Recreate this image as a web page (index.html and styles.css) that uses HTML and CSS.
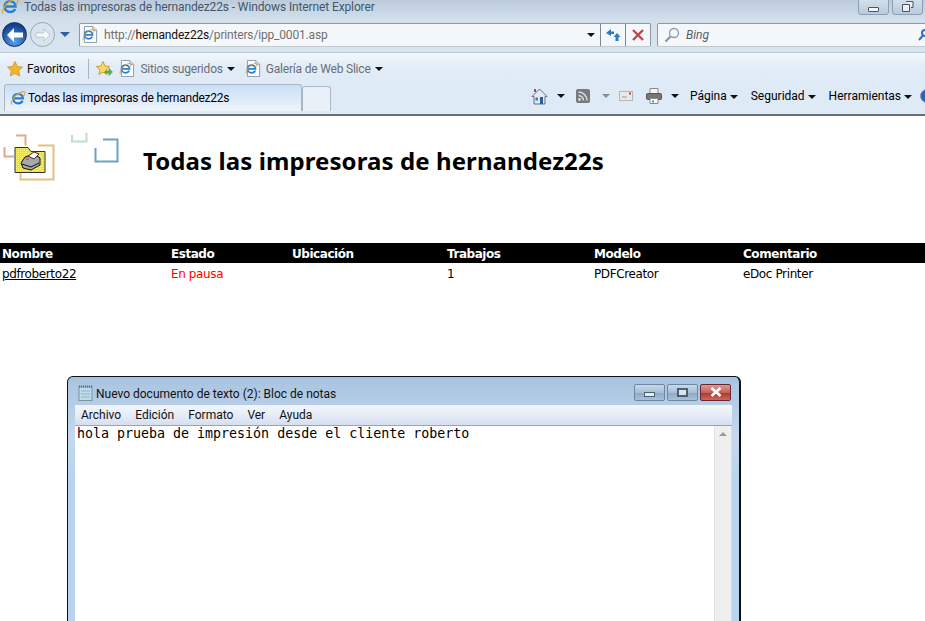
FILE: index.html
```html
<!DOCTYPE html>
<html lang="es">
<head>
<meta charset="UTF-8">
<title>Todas las impresoras de hernandez22s</title>
<link rel="stylesheet" href="styles.css">
</head>
<body>
<svg class="defs" width="0" height="0">
  <symbol id="ie" viewBox="0 0 18 18">
    <path d="M4 9.500h10.500C14.500 6.500 12 4.300 9 4.300S3.500 6.600 3.500 9.600 6 15 9 15c2.400 0 4.200-1 5.200-3" fill="none" stroke="#2a80cf" stroke-width="2.500"/>
    <path d="M2 16.500C.3 14.500 3.500 8 9 4.300c4-2.700 8-3.500 8-1 0 1-.8 2.500-2 3.700" fill="none" stroke="#e8a62c" stroke-width="1.300"/>
  </symbol>
  <symbol id="page" viewBox="0 0 16 18">
    <path d="M1.500.5h9l4 4v13h-13z" fill="#fdfdfd" stroke="#8b97a3"/>
    <path d="M10.500.5v4h4" fill="#dfe5ea" stroke="#8b97a3"/>
  </symbol>
  <pattern id="dither" width="2" height="2" patternUnits="userSpaceOnUse">
    <rect width="2" height="2" fill="#f5e800"/>
    <rect width="1" height="1" fill="#fff66a"/>
  </pattern>
</svg>

<div class="browser">
  <div class="titlebar">
    <svg class="ic18"><use href="#ie"/></svg>
    <span class="titlebar-text">Todas las impresoras de hernandez22s - Windows Internet Explorer</span>
    <div class="winbtns">
      <span class="winbtn"><i class="glyph-min"></i></span>
      <span class="winbtn"><svg width="12" height="11" viewBox="0 0 12 11"><path d="M4 .5h7v6H9M.5 3.500h7v7h-7z" fill="#e8eef5" stroke="#4a5560"/></svg></span>
      <span class="winbtn"></span>
    </div>
  </div>

  <div class="addressrow">
    <div class="navbtns">
      <span class="nav-back">
        <svg width="18" height="16" viewBox="0 0 18 16"><path d="M8 1 1 8l7 7V10.500h9v-5H8z" fill="#fff"/></svg>
      </span>
      <span class="nav-forward">
        <svg width="16" height="14" viewBox="0 0 18 16"><path d="M10 1l7 7-7 7V10.500H1v-5h9z" fill="#f4f6f8" stroke="#b6c0cb"/></svg>
      </span>
      <i class="nav-arrow"></i>
    </div>
    <div class="addressbox">
      <span class="address-icon"><svg class="page16"><use href="#page"/></svg><svg class="ie-over"><use href="#ie"/></svg></span>
      <span class="url">http://<b>hernandez22s</b>/printers/ipp_0001.asp</span>
      <i class="arrow arrow-addr"></i>
      <span class="addr-btn">
        <svg width="16" height="14" viewBox="0 0 16 14"><path d="M6 1 1 5l5 3V6h3V3.500H6zM12 5l3.500 4h-2v4h-3V9h-2z" fill="#2f78c4"/></svg>
      </span>
      <span class="addr-btn">
        <svg width="12" height="12" viewBox="0 0 12 12"><path d="M1 1l10 10M11 1 1 11" stroke="#c0454a" stroke-width="2.400"/></svg>
      </span>
    </div>
    <div class="searchbox">
      <svg width="16" height="16" viewBox="0 0 16 16"><circle cx="10" cy="6" r="4.500" fill="#f2f7fb" stroke="#8d9dad" stroke-width="1.300"/><path d="M6.500 9.500 1.500 14.500" stroke="#8a8f94" stroke-width="2"/></svg>
      <span class="search-text">Bing</span>
      <svg class="search-go" width="10" height="14" viewBox="0 0 10 14"><circle cx="7" cy="5" r="3" fill="none" stroke="#2f6fbd" stroke-width="2"/><path d="M4.500 8 1 12" stroke="#2f6fbd" stroke-width="2"/></svg>
    </div>
  </div>

  <div class="favrow">
    <svg class="star" width="16" height="16" viewBox="0 0 16 16"><path d="M8 .5l2.300 5 5.200.6-3.800 3.600 1 5.300L8 12.400l-4.700 2.600 1-5.300L.5 6.100l5.200-.6z" fill="#f4b52c" stroke="#c98a16" stroke-width=".7"/></svg>
    <span class="fav-label">Favoritos</span>
    <i class="fav-sep"></i>
    <svg class="addfav" width="17" height="16" viewBox="0 0 17 16"><path d="M7 .5l2 4.500 4.700.5-3.500 3.200 1 4.800L7 11.200l-4.200 2.300 1-4.800L.3 5.500 5 5z" fill="#f7d968" stroke="#c98a16" stroke-width=".8"/><path d="M9 10h4V7.500l3.500 3.500-3.500 3.500V12H9z" fill="#57b947" stroke="#3b8a2f" stroke-width=".5"/></svg>
    <span class="fav-link">
      <span class="address-icon"><svg class="page16"><use href="#page"/></svg><svg class="ie-over"><use href="#ie"/></svg></span>
      <span>Sitios sugeridos</span>
      <i class="arrow"></i>
    </span>
    <span class="fav-link">
      <span class="address-icon"><svg class="page16"><use href="#page"/></svg><svg class="ie-over"><use href="#ie"/></svg></span>
      <span>Galería de Web Slice</span>
      <i class="arrow"></i>
    </span>
  </div>

  <div class="tabrow">
    <div class="tab">
      <svg class="ic16"><use href="#ie"/></svg>
      <span>Todas las impresoras de hernandez22s</span>
    </div>
    <div class="newtab"></div>
    <div class="cmdbar">
      <svg class="cmd-home" width="17" height="17" viewBox="0 0 17 17"><path d="M8.500 1 1 8.500h2V16h11V8.500h2z" fill="#e3e9f0" stroke="#5d7088"/><path d="M9 9h3v7H9z" fill="#2b5c9e"/><path d="M4.500 9.500h2.500v3H4.500z" fill="#3f78bd"/><path d="M3 1h2v3H3z" fill="#b2453f"/></svg>
      <i class="arrow cmd-arrow"></i>
      <svg class="cmd-feed" width="14" height="14" viewBox="0 0 14 14"><rect width="14" height="14" rx="2" fill="#77797c"/><circle cx="3.500" cy="10.500" r="1.400" fill="#ddd"/><path d="M2.500 6.500a5 5 0 0 1 5 5M2.500 3a8.500 8.500 0 0 1 8.500 8.500" fill="none" stroke="#ddd" stroke-width="1.500"/></svg>
      <i class="arrow arrow-grey"></i>
      <svg class="cmd-mail" width="14" height="10" viewBox="0 0 14 10"><rect x=".5" y=".5" width="13" height="9" fill="#e9e9e9" stroke="#b5b5b5"/><path d="M3 6h5" stroke="#999"/><rect x="10" y="1.500" width="2" height="2" fill="#d33"/></svg>
      <svg class="cmd-print" width="16" height="16" viewBox="0 0 16 16"><path d="M4 .5h8v5H4z" fill="#f4f4f4" stroke="#8a8a8a"/><rect x=".5" y="5.500" width="15" height="6" rx="1" fill="#777" stroke="#555"/><path d="M4 10.500h8v5H4z" fill="#fff" stroke="#8a8a8a"/><path d="M6 12.500h2v2H6z" fill="#3f8ed0"/></svg>
      <i class="arrow cmd-arrow"></i>
      <span class="cmd-item cmd-first">Página <i class="arrow"></i></span>
      <span class="cmd-item">Seguridad <i class="arrow"></i></span>
      <span class="cmd-item">Herramientas <i class="arrow"></i></span>
      <span class="cmd-help"></span>
    </div>
  </div>
</div>

<div class="page">
  <div class="page-head">
    <svg class="logo" width="120" height="54" viewBox="0 0 120 54">
      <path d="M16 5.500h9.500v10" fill="none" stroke="#e2a98a" stroke-width="2"/>
      <path d="M4.500 17v9.500H14" fill="none" stroke="#e2a98a" stroke-width="2"/>
      <path d="M38 15.500h15.500v34h-33V40" fill="none" stroke="#e0c281" stroke-width="2"/>
      <path d="M72 5v6.500h14.500V3" fill="none" stroke="#c2dcc5" stroke-width="2"/>
      <path d="M103 9.500h14.500v22h-22V18" fill="none" stroke="#66a5c6" stroke-width="2"/>
      <path d="M15 17.500h13l3 4h14v21H15z" fill="url(#dither)" stroke="#333"/>
      <path d="M21 33l4-6 9-3 6 4v7l-9 5-8-2z" fill="#a8a8a8" stroke="#111"/>
      <path d="M28 26l6-4 5 2-5 5z" fill="#fff" stroke="#333"/>
      <path d="M22 34l9 3 8-4" fill="none" stroke="#111"/>
      <path d="M26 29h3" stroke="#d33"/>
    </svg>
    <h1 class="page-title">Todas las impresoras de hernandez22s</h1>
  </div>

  <table class="printers">
    <tr>
      <th class="c-name">Nombre</th>
      <th class="c-state">Estado</th>
      <th class="c-place">Ubicación</th>
      <th class="c-jobs">Trabajos</th>
      <th class="c-model">Modelo</th>
      <th>Comentario</th>
    </tr>
    <tr>
      <td><a href="#">pdfroberto22</a></td>
      <td class="paused">En pausa</td>
      <td></td>
      <td>1</td>
      <td>PDFCreator</td>
      <td>eDoc Printer</td>
    </tr>
  </table>
</div>

<div class="notepad">
  <div class="np-title">
    <svg class="np-icon" width="15" height="16" viewBox="0 0 15 16"><rect x="1" y="2" width="13" height="13.500" fill="#bcdcea" stroke="#7d93a3"/><path d="M1 1.500h13" stroke="#666" stroke-dasharray="1 1" stroke-width="2"/><path d="M3 6h9M3 9h9M3 12h9" stroke="#8fb4c8"/></svg>
    <span class="np-title-text">Nuevo documento de texto (2): Bloc de notas</span>
    <div class="np-btns">
      <span class="np-btn"><i class="np-min"></i></span>
      <span class="np-btn"><i class="np-max"></i></span>
      <span class="np-btn np-close"><svg width="14" height="10" viewBox="0 0 14 10"><path d="M2.500 1l9 8M11.500 1l-9 8" stroke="#fff" stroke-width="2.600"/></svg></span>
    </div>
  </div>
  <div class="np-menu">
    <span>Archivo</span><span>Edición</span><span>Formato</span><span>Ver</span><span>Ayuda</span>
  </div>
  <div class="np-body">
    <div class="np-text">hola prueba de impresión desde el cliente roberto</div>
    <div class="np-scroll"><i class="np-up"></i></div>
  </div>
</div>
</body>
</html>
```

FILE: styles.css
```css
*{
    margin:0px;
    padding:0px;
    box-sizing:border-box;
}
html,body{
    height:621px;
    overflow:hidden;
}
body{
    position:relative;
    background:#fff;
    font-family:Roboto,"Open Sans",sans-serif;
    font-size:12px;
    color:#000;
}
i{
    display:inline-block;
}
.defs{
    position:absolute;
}
.arrow{
    width:0;
    height:0;
    border-left:4px solid transparent;
    border-right:4px solid transparent;
    border-top:4px solid #111;
    vertical-align:1px;
}
.arrow-grey{
    border-top-color:#8b8b8b;
}

/* browser chrome */
.browser{
    height:116px;
    border-bottom:2px solid #6e6e6e;
    background:#dfebf7;
}
.titlebar{
    height:20px;
    display:flex;
    align-items:flex-start;
    padding-left:1px;
    background:linear-gradient(#bccbdb,#d3e0ec);
    overflow:hidden;
}
.ic18{
    width:18px;
    height:18px;
    margin-top:-3px;
    flex:none;
}
.titlebar-text{
    margin-left:5px;
    color:#44566a;
    line-height:14px;
    letter-spacing:-.12px;
}
.winbtns{
    margin-left:auto;
    margin-right:-32px;
    margin-top:-6px;
    display:flex;
    gap:3px;
    flex:none;
}
.winbtn{
    width:31px;
    height:21px;
    border:1px solid #8ba0b4;
    border-radius:0 0 3px 3px;
    background:linear-gradient(#dbe6f0,#b9cadb);
    display:flex;
    align-items:flex-end;
    justify-content:center;
    padding-bottom:2px;
}
.glyph-min{
    width:11px;
    height:5px;
    border:1px solid #4a5560;
    border-radius:1px;
    background:#f2f5f8;
}
.addressrow{
    height:33px;
    display:flex;
    align-items:center;
    padding:0 0 3px 2px;
    background:linear-gradient(#d3e0ec,#d9e6f2);
    border-bottom:1px solid #bccad8;
    overflow:hidden;
}
.navbtns{
    width:77px;
    display:flex;
    align-items:center;
    flex:none;
}
.nav-back{
    width:25px;
    height:25px;
    border-radius:50%;
    background:radial-gradient(circle at 50% 80%,#5aa2ee,#123f8f 75%);
    border:1px solid #19305e;
    display:flex;
    align-items:center;
    justify-content:center;
}
.nav-forward{
    width:25px;
    height:25px;
    margin-left:3px;
    border-radius:50%;
    background:#d9e3ed;
    border:1px solid #9aa9b9;
    display:flex;
    align-items:center;
    justify-content:center;
}
.nav-arrow{
    margin-left:5px;
    width:0;
    height:0;
    border-left:5px solid transparent;
    border-right:5px solid transparent;
    border-top:5px solid #2f5f9e;
}
.addressbox,.searchbox{
    height:24px;
    background:#f5f8fb;
    border:1px solid #8f979f;
    border-bottom-color:#c0c8d0;
    border-radius:2px;
    display:flex;
    align-items:center;
    flex:none;
}
.addressbox{
    width:572px;
    padding-left:3px;
}
.address-icon{
    position:relative;
    width:16px;
    height:17px;
    display:inline-block;
    flex:none;
}
.page16{
    width:15px;
    height:17px;
    display:block;
}
.ie-over{
    position:absolute;
    left:-1px;
    top:2px;
    width:13px;
    height:13px;
}
.url{
    margin-left:5px;
    color:#6f6f6f;
    letter-spacing:-.17px;
}
.url b{
    font-weight:400;
    color:#111;
}
.arrow-addr{
    margin-left:auto;
    margin-right:5px;
    vertical-align:0;
}
.addr-btn{
    width:25px;
    height:100%;
    border-left:1px solid #7e8690;
    display:flex;
    align-items:center;
    justify-content:center;
}
.searchbox{
    width:272px;
    margin-left:6px;
    padding-left:6px;
}
.search-text{
    margin-left:6px;
    font-style:italic;
    color:#555c66;
}
.search-go{
    margin-left:auto;
}
.favrow{
    height:31px;
    display:flex;
    align-items:center;
    padding-left:7px;
    background:linear-gradient(#f3f8fe,#e3edf8 40%,#dfeaf7);
}
.fav-label{
    margin-left:4px;
    color:#111;
    letter-spacing:-.1px;
}
.fav-sep{
    width:1px;
    height:20px;
    margin:0 7px 0 13px;
    background:#aab4bf;
}
.fav-link{
    display:flex;
    align-items:center;
    gap:4px;
    color:#676f78;
    margin-left:7px;
    white-space:nowrap;
    letter-spacing:-.2px;
}
.fav-link + .fav-link{
    margin-left:11px;
}
.tabrow{
    height:30px;
    display:flex;
    align-items:flex-start;
    padding-left:4px;
    background:#dfeaf7;
}
.tab{
    width:298px;
    height:27px;
    display:flex;
    align-items:center;
    gap:2px;
    padding-left:5px;
    background:linear-gradient(#c9dff6,#eef4fb);
    border:1px solid #a9b7c6;
    border-bottom:0;
    border-radius:3px 3px 0 0;
    flex:none;
    letter-spacing:-.22px;
}
.ic16{
    width:16px;
    height:16px;
}
.newtab{
    width:29px;
    height:25px;
    margin-top:2px;
    background:#e9f0f8;
    border:1px solid #a9b7c6;
    border-bottom:0;
    border-radius:3px 3px 0 0;
    flex:none;
}
.cmdbar{
    margin-left:auto;
    margin-right:-9px;
    height:24px;
    display:flex;
    align-items:center;
    white-space:nowrap;
}
.cmd-arrow{
    margin-left:9px;
    vertical-align:0;
}
.arrow-grey{
    margin-left:12px;
}
.cmd-feed{
    margin-left:11px;
}
.cmd-mail{
    margin-left:9px;
}
.cmd-print{
    margin-left:13px;
}
.cmd-item{
    margin-left:13px;
}
.cmd-first{
    margin-left:11px;
}
.cmd-help{
    width:14px;
    height:14px;
    margin-left:8px;
    border-radius:50%;
    background:#2a62b5;
    border:1px solid #8a99aa;
}

/* page */
.page-head{
    height:127px;
    display:flex;
    align-items:flex-start;
    padding-top:14px;
}
.logo{
    flex:none;
}
.page-title{
    margin:14px 0 0 23px;
    font-family:"Noto Sans",sans-serif;
    font-size:24px;
    font-weight:700;
    line-height:34px;
    letter-spacing:.09px;
    white-space:nowrap;
}
.printers{
    width:100%;
    table-layout:fixed;
    border-collapse:collapse;
    font-family:"DejaVu Sans",sans-serif;
    font-size:12px;
    letter-spacing:-.38px;
}
.printers th{
    height:20px;
    padding:1px 0 0 2px;
    background:#000;
    color:#fff;
    text-align:left;
    letter-spacing:-.45px;
}
.printers td{
    height:22px;
    padding-left:2px;
}
.c-name{
    width:169px;
}
.c-state{
    width:121px;
}
.c-place{
    width:155px;
}
.c-jobs{
    width:147px;
}
.c-model{
    width:149px;
}
.printers a{
    color:#000;
}
.paused{
    color:#f00;
}

/* notepad window, sits on top of the page */
.notepad{
    position:absolute;
    left:67px;
    top:376px;
    width:674px;
    height:260px;
    padding:0 7px;
    background:linear-gradient(#a9c3df,#c4d9ee 60px,#b9d4ee 100px);
    border:1px solid #111;
    border-right-width:2px;
    border-radius:6px 6px 0 0;
}
.np-title{
    height:28px;
    display:flex;
    align-items:center;
    padding-top:2px;
}
.np-icon{
    margin-left:3px;
    margin-top:1px;
}
.np-title-text{
    margin:3px 0 0 3px;
    color:#111;
}
.np-btns{
    margin-left:auto;
    margin-right:1px;
    display:flex;
    gap:2px;
}
.np-btn{
    width:31px;
    height:17px;
    border:1px solid #6f86a0;
    border-radius:2px;
    background:linear-gradient(#c9d9ea,#a6bed8 50%,#8faac8 55%,#a8c0da);
    display:flex;
    align-items:center;
    justify-content:center;
}
.np-close{
    border-color:#6d2430;
    background:linear-gradient(#dd9a8f,#c4615a 50%,#ad3b30 55%,#c66a5e);
}
.np-min{
    width:11px;
    height:5px;
    margin-top:4px;
    background:#e7edf4;
    border:1px solid #4f5f72;
}
.np-max{
    width:11px;
    height:9px;
    border:2px solid #4f5f72;
    background:#dce6f0;
}
.np-menu{
    height:21px;
    display:flex;
    align-items:center;
    gap:14px;
    padding:0 0 1px 6px;
    background:linear-gradient(#f2f5fb,#e9eef8 40%,#d6dff0);
    border-bottom:1px solid #8ea8c2;
    color:#111;
}
.np-body{
    height:210px;
    display:flex;
    background:#fff;
}
.np-text{
    flex:1;
    padding-left:2px;
    font-family:"DejaVu Sans Mono",monospace;
    font-size:13.3px;
    line-height:15px;
    white-space:pre;
}
.np-scroll{
    width:18px;
    background:#efefef;
    border-left:1px solid #e2e2e2;
    border-right:1px solid #dcdcdc;
    display:flex;
    justify-content:center;
    padding-top:6px;
}
.np-up{
    width:0;
    height:0;
    border-left:4px solid transparent;
    border-right:4px solid transparent;
    border-bottom:4px solid #9a9a9a;
}
```
